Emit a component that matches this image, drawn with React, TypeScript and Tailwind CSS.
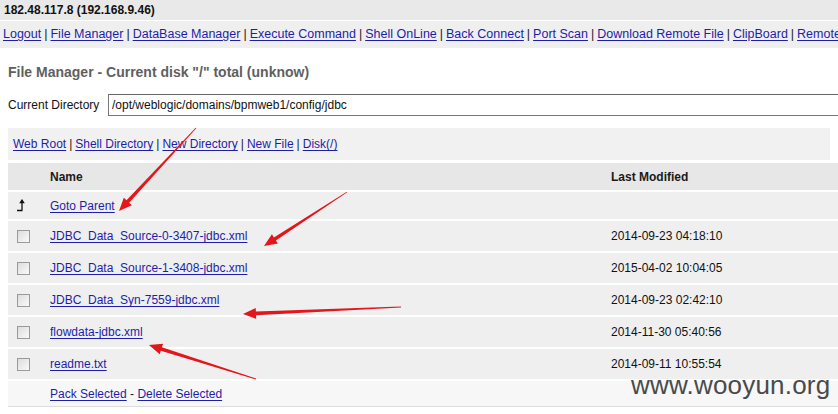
import React from "react";

const navLinks = [
  "Logout",
  "File Manager",
  "DataBase Manager",
  "Execute Command",
  "Shell OnLine",
  "Back Connect",
  "Port Scan",
  "Download Remote File",
  "ClipBoard",
  "Remote Control",
];

const toolLinks = ["Web Root", "Shell Directory", "New Directory", "New File", "Disk(/)"];

const files = [
  { name: "JDBC_Data_Source-0-3407-jdbc.xml", modified: "2014-09-23 04:18:10" },
  { name: "JDBC_Data_Source-1-3408-jdbc.xml", modified: "2015-04-02 10:04:05" },
  { name: "JDBC_Data_Syn-7559-jdbc.xml", modified: "2014-09-23 02:42:10" },
  { name: "flowdata-jdbc.xml", modified: "2014-11-30 05:40:56" },
  { name: "readme.txt", modified: "2014-09-11 10:55:54" },
];

// red annotation arrows drawn over the screenshot
const arrows = [
  { x1: 196, y1: 128, x2: 119, y2: 211 },
  { x1: 347, y1: 192, x2: 264, y2: 246 },
  { x1: 401, y1: 307, x2: 243, y2: 314 },
  { x1: 256, y1: 379, x2: 149, y2: 345 },
];

function Arrow({ x1, y1, x2, y2 }: { x1: number; y1: number; x2: number; y2: number }) {
  const dx = x2 - x1;
  const dy = y2 - y1;
  const len = Math.sqrt(dx * dx + dy * dy);
  const ux = dx / len;
  const uy = dy / len;
  const nx = -uy;
  const ny = ux;
  const headLen = 13;
  const headW = 5.5;
  const bx = x2 - ux * headLen;
  const by = y2 - uy * headLen;
  const tail = 0.4;
  const neck = 1.8;
  const pts = [
    [x1 + nx * tail, y1 + ny * tail],
    [bx + nx * neck, by + ny * neck],
    [bx + nx * headW, by + ny * headW],
    [x2, y2],
    [bx - nx * headW, by - ny * headW],
    [bx - nx * neck, by - ny * neck],
    [x1 - nx * tail, y1 - ny * tail],
  ]
    .map((p) => p[0].toFixed(1) + "," + p[1].toFixed(1))
    .join(" ");
  return <polygon points={pts} fill="#e3161b" />;
}

function Checkbox() {
  return (
    <span className="block w-[13px] h-[13px] border border-[#9a9a9a] bg-gradient-to-br from-[#dcdcdc] to-[#fafafa]" />
  );
}

function UpIcon() {
  return (
    <svg width="10" height="13" viewBox="0 0 10 13">
      <path d="M6 1 L6 11.5 M1 11.5 L6.5 11.5" stroke="#111" strokeWidth="1.3" fill="none" />
      <path d="M6 0 L8.8 4.2 L3.2 4.2 Z" fill="#111" />
    </svg>
  );
}

function Link({ children }: { children: React.ReactNode }) {
  return <a className="text-[#1e1ea8] underline underline-offset-[2px] cursor-pointer">{children}</a>;
}

export default function App() {
  return (
    <div className="relative w-[838px] h-[414px] overflow-hidden bg-white font-['Liberation_Sans',Arial,sans-serif] text-[12px] text-[#222]">
      <div className="h-[20px] bg-[#e9e9e9] px-[4px] flex items-center">
        <span className="font-bold text-[12px] text-[#111]">182.48.117.8 (192.168.9.46)</span>
      </div>
      <div className="h-[28px] border-t border-white bg-[#efefef] px-[3px] leading-[27px] whitespace-nowrap overflow-hidden text-[12.5px] text-[#222]">
        {navLinks.map((l, i) => (
          <React.Fragment key={l}>
            {i > 0 && <span className="px-[3px]">|</span>}
            <Link>{l}</Link>
          </React.Fragment>
        ))}
      </div>

      <div className="px-[8px]">
        <h1 className="mt-[15px] text-[14px] font-bold text-[#5f5f5f] leading-[18px]">
          File Manager - Current disk "/" total (unknow)
        </h1>
        <div className="mt-[13px] flex items-center h-[22px]">
          <span className="w-[100px] text-[12px] text-[#111]">Current Directory</span>
          <div className="flex-1 h-[22px] border border-[#777] border-t-[#666] flex items-center px-[3px] text-[12px] text-[#111] -mr-[20px]">
            /opt/weblogic/domains/bpmweb1/config/jdbc
          </div>
        </div>
        <div className="mt-[12px] h-[32px] bg-[#f1f1f1] px-[5px] flex items-center whitespace-nowrap text-[12px]">
          {toolLinks.map((l, i) => (
            <React.Fragment key={l}>
              {i > 0 && <span className="px-[3px]">|</span>}
              <Link>{l}</Link>
            </React.Fragment>
          ))}
        </div>

        <div className="mt-[3px] -mr-[8px]">
          <div className="h-[27px] bg-[#e7e7e7] flex items-center font-bold text-[12px] text-[#1a1a1a]">
            <div className="w-[42px]" />
            <div className="w-[561px]">Name</div>
            <div className="flex-1">Last Modified</div>
          </div>
          <div className="mt-[2px] h-[27px] bg-[#efefef] flex items-center">
            <div className="w-[42px] pl-[8px]">
              <UpIcon />
            </div>
            <div className="w-[561px]">
              <Link>Goto Parent</Link>
            </div>
            <div className="flex-1" />
          </div>
          {files.map((f) => (
            <div key={f.name} className="border-t-2 border-white h-[32px] bg-[#efefef] flex items-center">
              <div className="w-[42px] pl-[9px]">
                <Checkbox />
              </div>
              <div className="w-[561px]">
                <Link>{f.name}</Link>
              </div>
              <div className="flex-1 text-[#111]">{f.modified}</div>
            </div>
          ))}
          <div className="border-t-2 border-white h-[28px] bg-[#f7f7f7] border-b border-b-[#dcdcdc] flex items-center">
            <div className="w-[42px]" />
            <div className="w-[561px]">
              <Link>Pack Selected</Link> - <Link>Delete Selected</Link>
            </div>
            <div className="flex-1" />
          </div>
        </div>
      </div>

      <div className="absolute left-[631px] top-[370px] text-[26px] leading-[30px] text-[#4a4a4a] font-['Liberation_Sans',Arial,sans-serif] tracking-[0.2px]">
        www.wooyun.org
      </div>

      <svg className="absolute inset-0 pointer-events-none" width="838" height="414">
        {arrows.map((a, i) => (
          <Arrow key={i} {...a} />
        ))}
      </svg>
    </div>
  );
}
